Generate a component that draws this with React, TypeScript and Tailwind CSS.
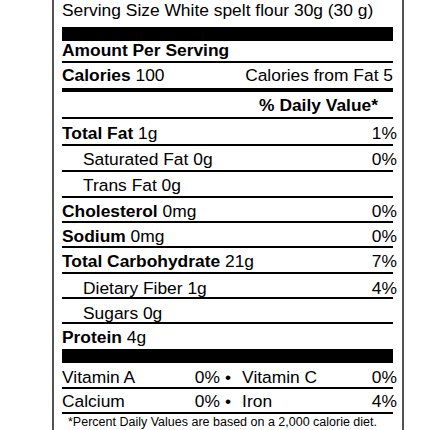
import React from 'react';

type Nutrient = {
  label: string;
  amount?: string;
  daily?: string;
  bold?: boolean;
  indent?: boolean;
  rowClass: string;
};

const nutrients: Nutrient[] = [
  { label: 'Total Fat', amount: '1g', daily: '1%', bold: true, rowClass: 'h-[27px] pt-[4px]' },
  { label: 'Saturated Fat', amount: '0g', daily: '0%', indent: true, rowClass: 'h-[26px] pt-[3px]' },
  { label: 'Trans Fat', amount: '0g', indent: true, rowClass: 'h-[26px] pt-[3px]' },
  { label: 'Cholesterol', amount: '0mg', daily: '0%', bold: true, rowClass: 'h-[25px] pt-[3px]' },
  { label: 'Sodium', amount: '0mg', daily: '0%', bold: true, rowClass: 'h-[25px] pt-[3px]' },
  { label: 'Total Carbohydrate', amount: '21g', daily: '7%', bold: true, rowClass: 'h-[26px] pt-[3px]' },
  { label: 'Dietary Fiber', amount: '1g', daily: '4%', indent: true, rowClass: 'h-[25px] pt-[4px]' },
  { label: 'Sugars', amount: '0g', indent: true, rowClass: 'h-[25px] pt-[4px]' },
];

const vitamins = [
  { a: 'Vitamin A', av: '0%', b: 'Vitamin C', bv: '0%', rowClass: 'h-[26px] pt-[4px]' },
  { a: 'Calcium', av: '0%', b: 'Iron', bv: '4%', rowClass: 'h-[25px] pt-[2px]' },
];

const App = () => {
  return (
    <div className="h-[430px] w-[430px] overflow-hidden bg-white text-black font-['Liberation_Sans',Arial,sans-serif] text-[17.4px] leading-[20px]">
      <div className="ml-[52px] w-[352px] border-x-2 border-[#555] pl-[8px] pr-[9px]">
        {/* Serving size */}
        <div className="whitespace-nowrap">Serving Size White spelt flour 30g (30 g)</div>
        <div className="mt-[7px] h-[14px] bg-black"></div>

        <div className="h-[22px] border-b-2 border-black font-bold leading-[18px]">Amount Per Serving</div>

        {/* Calories */}
        <div className="flex h-[29px] justify-between border-b-4 border-black pt-[2px]">
          <span>
            <b>Calories</b> 100
          </span>
          <span>Calories from Fat 5</span>
        </div>

        <div className="flex h-[27px] justify-end border-b-2 border-black pt-[3px] pr-[15px] font-bold">% Daily Value*</div>

        {/* Nutrient rows */}
        {nutrients.map((n) => (
          <div key={n.label} className={`flex justify-between border-b-2 border-black ${n.rowClass}`}>
            <span className={n.indent ? 'pl-[21px]' : ''}>
              {n.bold ? <b>{n.label}</b> : n.label} {n.amount}
            </span>
            {n.daily && <span className="mr-[-4px]">{n.daily}</span>}
          </div>
        ))}

        <div className="h-[39px] border-b-[14px] border-black pt-[3px]">
          <b>Protein</b> 4g
        </div>

        {/* Vitamins */}
        {vitamins.map((v) => (
          <div key={v.a} className={`flex border-b-2 border-black ${v.rowClass}`}>
            <div className="flex w-[158px] justify-between">
              <span>{v.a}</span>
              <span>{v.av}</span>
            </div>
            <span className="ml-[5px]">•</span>
            <div className="ml-[11px] mr-[-4px] flex flex-1 justify-between">
              <span>{v.b}</span>
              <span>{v.bv}</span>
            </div>
          </div>
        ))}

        <div className="pl-[6px] text-[12.5px] leading-[16px] whitespace-nowrap">
          *Percent Daily Values are based on a 2,000 calorie diet.
        </div>
      </div>
    </div>
  );
};

export default App;
